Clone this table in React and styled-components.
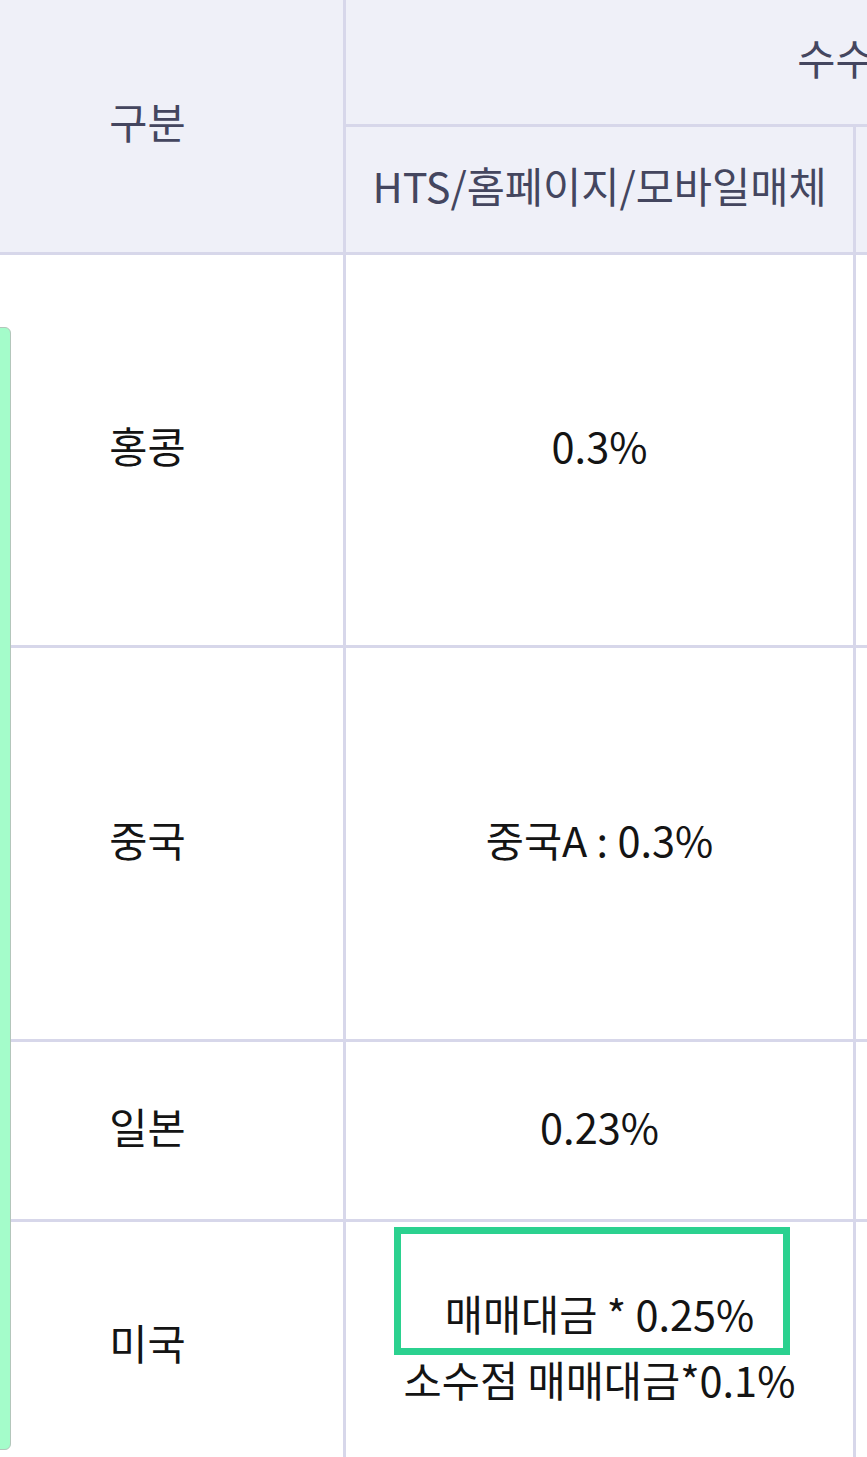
import React from "react";
import styled, { createGlobalStyle } from "styled-components";

const Global = createGlobalStyle`
  html, body {
    margin: 0;
    padding: 0;
    overflow: hidden;
    background: #ffffff;
  }
  body {
    font-family: "Noto Sans CJK KR", "Noto Sans", sans-serif;
  }
`;

const Page = styled.div`
  position: relative;
  width: 867px;
  height: 1457px;
  overflow: hidden;
`;

const Grid = styled.div`
  display: grid;
  grid-template-columns: 343px 507px 507px;
  grid-template-rows: 124px 125px 390px 391px 177px 249px;
  gap: 3px;
  width: max-content;
  background: #d7d7ea;
`;

const Cell = styled.div`
  position: relative;
  display: flex;
  align-items: center;
  justify-content: center;
  box-sizing: border-box;
  padding: 0 ${(p) => (p.$lead ? "48px" : "0")} 10px 0;
  text-align: center;
  font-size: 41.5px;
  line-height: 66px;
  grid-row: ${(p) => (p.$rowSpan ? `span ${p.$rowSpan}` : "auto")};
  grid-column: ${(p) => (p.$colSpan ? `span ${p.$colSpan}` : "auto")};
  background: ${(p) => (p.$head ? "#eff0f8" : "#ffffff")};
  color: ${(p) => (p.$head ? "#44465f" : "#141414")};
  white-space: nowrap;
`;

const Lines = styled.div`
  display: flex;
  flex-direction: column;
  align-items: center;
  margin-top: 8px;
`;

const Highlight = styled.div`
  position: absolute;
  left: 48px;
  top: 5px;
  width: 396px;
  height: 128px;
  box-sizing: border-box;
  border: 7px solid #2bd18f;
  pointer-events: none;
`;

const ScrollThumb = styled.div`
  position: absolute;
  left: -6px;
  top: 327px;
  width: 17px;
  height: 1123px;
  box-sizing: border-box;
  background: #a4fcca;
  border: 1.5px solid #b3c6bb;
  border-radius: 6px;
`;

const rows = [
  { name: "홍콩", online: "0.3%", branch: "0.5%" },
  { name: "중국", online: "중국A : 0.3%", branch: "중국A : 0.5%" },
  { name: "일본", online: "0.23%", branch: "0.5%" },
];

export default function App() {
  return (
    <Page>
      <Global />
      <Grid>
        <Cell $head $lead $rowSpan={2}>구분</Cell>
        <Cell $head $colSpan={2}>수수료</Cell>
        <Cell $head>HTS/홈페이지/모바일매체</Cell>
        <Cell $head>영업점</Cell>
        {rows.map((r) => (
          <React.Fragment key={r.name}>
            <Cell $lead>{r.name}</Cell>
            <Cell>{r.online}</Cell>
            <Cell>{r.branch}</Cell>
          </React.Fragment>
        ))}
        <Cell $lead>미국</Cell>
        <Cell>
          <Lines>
            <span>매매대금 * 0.25%</span>
            <span>소수점 매매대금*0.1%</span>
          </Lines>
          <Highlight />
        </Cell>
        <Cell>매매대금 * 0.5%</Cell>
      </Grid>
      <ScrollThumb />
    </Page>
  );
}
